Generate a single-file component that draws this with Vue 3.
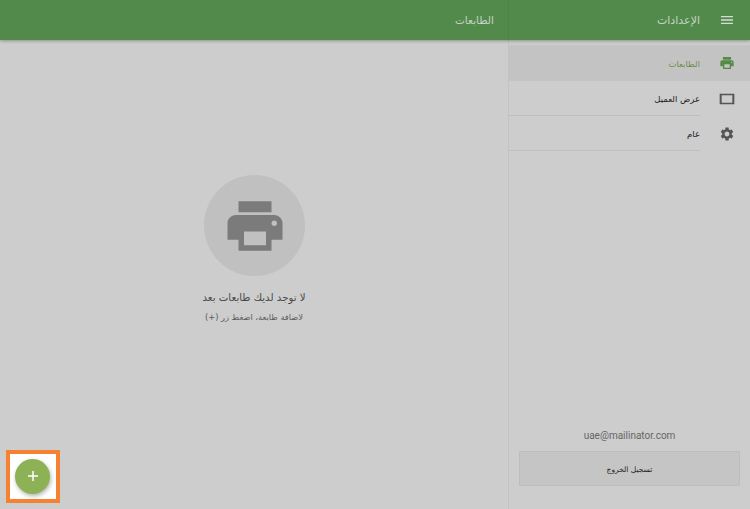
<template>
  <div class="screen" dir="rtl">
    <header class="topbar">
      <div class="topbar-side">
        <svg class="menu-icon" viewBox="0 0 24 24" width="16" height="16"><path d="M3 18h18v-2H3zm0-5h18v-2H3zm0-7v2h18V6z" /></svg>
        <span class="topbar-title side-title">الإعدادات</span>
      </div>
      <div class="topbar-main">
        <span class="topbar-title">الطابعات</span>
      </div>
    </header>

    <div class="body">
      <aside class="sidebar">
        <nav class="nav">
          <a
            v-for="item in items"
            :key="item.label"
            :class="['nav-item', { 'is-active': item.active }]"
          >
            <span class="nav-icon">
              <svg viewBox="0 0 24 24" width="16" height="16"><path :d="item.icon" /></svg>
            </span>
            <span class="nav-label">{{ item.label }}</span>
          </a>
        </nav>
        <div class="account">
          <div class="email" dir="ltr">uae@mailinator.com</div>
          <button class="logout">تسجيل الخروج</button>
        </div>
      </aside>

      <main class="content">
        <div class="empty">
          <div class="empty-circle">
            <svg viewBox="0 0 24 24" width="66" height="66"><path :d="printerPath" /></svg>
          </div>
          <p class="empty-title">لا توجد لديك طابعات بعد</p>
          <p class="empty-hint">لاضافة طابعة، اضغط زر (+)</p>
        </div>
        <div class="fab-frame">
          <button class="fab">
            <svg viewBox="0 0 14 14" width="14" height="14"><path d="M6.25 2h1.5v4.25H12v1.5H7.75V12h-1.5V7.75H2v-1.5h4.25z" /></svg>
          </button>
        </div>
      </main>
    </div>
  </div>
</template>

<script setup>
const printerPath =
  "M19 8H5c-1.66 0-3 1.34-3 3v6h4v4h12v-4h4v-6c0-1.66-1.34-3-3-3zm-3 11H8v-5h8v5zm3-7c-.55 0-1-.45-1-1s.45-1 1-1 1 .45 1 1-.45 1-1 1zm-1-9H6v4h12V3z";

const items = [
  { label: "الطابعات", icon: printerPath, active: true },
  {
    label: "عرض العميل",
    icon: "M1 4v16h22V4H1zm3 2.5h16v11H4V6.5z",
    active: false,
  },
  {
    label: "عام",
    icon: "M19.14 12.94c.04-.3.06-.61.06-.94 0-.32-.02-.64-.07-.94l2.03-1.58c.18-.14.23-.41.12-.61l-1.92-3.32c-.12-.22-.37-.29-.59-.22l-2.39.96c-.5-.38-1.03-.7-1.62-.94l-.36-2.54c-.04-.24-.24-.41-.48-.41h-3.84c-.24 0-.43.17-.47.41l-.36 2.54c-.59.24-1.13.57-1.62.94l-2.39-.96c-.22-.08-.47 0-.59.22L2.74 8.87c-.12.21-.08.47.12.61l2.03 1.58c-.05.3-.09.63-.09.94s.02.64.07.94l-2.03 1.58c-.18.14-.23.41-.12.61l1.92 3.32c.12.22.37.29.59.22l2.39-.96c.5.38 1.03.7 1.62.94l.36 2.54c.05.24.24.41.48.41h3.84c.24 0 .44-.17.47-.41l.36-2.54c.59-.24 1.13-.56 1.62-.94l2.39.96c.22.08.47 0 .59-.22l1.92-3.32c.12-.22.07-.47-.12-.61l-2.01-1.58zM12 15.6c-1.98 0-3.6-1.62-3.6-3.6s1.62-3.6 3.6-3.6 3.6 1.62 3.6 3.6-1.62 3.6-3.6 3.6z",
    active: false,
  },
];
</script>

<style>
html,
body {
  margin: 0;
  background: #cdcdcd;
}
</style>

<style scoped>
.screen {
  width: 750px;
  height: 509px;
  display: flex;
  flex-direction: column;
  overflow: hidden;
  background: #cdcdcd;
  font-family: "DejaVu Sans", "Noto Sans", sans-serif;
}

.topbar {
  flex: 0 0 40px;
  display: flex;
  background: #528a4c;
  box-shadow: 0 1px 3px rgba(0, 0, 0, 0.3);
  position: relative;
  z-index: 1;
}

.topbar-side {
  width: 242px;
  display: flex;
  align-items: center;
  border-left: 1px solid #4d8347;
  box-sizing: border-box;
}

.menu-icon {
  fill: #d3ddd1;
  margin: 0 15px 0 19px;
}

.topbar-main {
  flex: 1;
  display: flex;
  align-items: center;
  padding-right: 14px;
}

.topbar-title {
  font-size: 10.5px;
  color: #c5d4c2;
}

.side-title {
  font-size: 11px;
}

.body {
  flex: 1;
  display: flex;
  min-height: 0;
}

.sidebar {
  width: 242px;
  box-sizing: border-box;
  border-left: 1px solid #c3c3c3;
  display: flex;
  flex-direction: column;
  justify-content: space-between;
  padding-top: 5px;
}

.nav {
  display: flex;
  flex-direction: column;
}

.nav-item {
  display: flex;
  align-items: center;
  height: 35px;
  font-size: 8.5px;
  color: #222;
}

.nav-item.is-active {
  background: #c3c3c3;
  color: #6a8f48;
  height: 36px;
}

.nav-icon {
  width: 50px;
  flex: none;
  box-sizing: border-box;
  padding-left: 4px;
  display: flex;
  justify-content: center;
}

.nav-icon svg {
  fill: #555;
}

.is-active .nav-icon svg {
  fill: #568b46;
}

.nav-label {
  flex: 1;
  height: 100%;
  display: flex;
  align-items: center;
  box-sizing: border-box;
  padding-top: 2px;
  border-bottom: 1px solid #bfbfbf;
}

.is-active .nav-label {
  border-bottom: none;
}

.account {
  padding: 0 10px 23px;
}

.email {
  text-align: center;
  font-family: Roboto, sans-serif;
  font-size: 10px;
  line-height: 12px;
  color: #666;
  margin-bottom: 9px;
}

.logout {
  display: block;
  width: 100%;
  height: 35px;
  padding: 1px 0 0;
  background: #c5c5c5;
  border: 1px solid #bdbdbd;
  border-radius: 1px;
  font-family: inherit;
  font-size: 7.5px;
  color: #222;
}

.content {
  flex: 1;
  position: relative;
  display: flex;
  justify-content: center;
}

.empty {
  margin-top: 135px;
  display: flex;
  flex-direction: column;
  align-items: center;
}

.empty-circle {
  width: 101px;
  height: 101px;
  box-sizing: border-box;
  padding-left: 1px;
  border-radius: 50%;
  background: #c0c0c0;
  display: flex;
  align-items: center;
  justify-content: center;
}

.empty-circle svg {
  fill: #7b7b7b;
}

.empty-title {
  margin: 16px 0 0;
  font-size: 10.2px;
  color: #4a4a4a;
}

.empty-hint {
  margin: 9px 0 0;
  font-size: 8.25px;
  color: #5a5a5a;
}

.fab-frame {
  position: absolute;
  left: 6px;
  bottom: 6px;
  width: 54px;
  height: 53px;
  box-sizing: border-box;
  border: 4px solid #f58233;
  padding: 0 1px 1px 0;
  background: #fff;
  display: flex;
  align-items: center;
  justify-content: center;
}

.fab {
  width: 35px;
  height: 35px;
  padding: 0;
  border: none;
  border-radius: 50%;
  background: #8db255;
  box-shadow: 1px 2px 4px rgba(0, 0, 0, 0.3);
  display: flex;
  align-items: center;
  justify-content: center;
}

.fab svg {
  fill: #fff;
}
</style>
